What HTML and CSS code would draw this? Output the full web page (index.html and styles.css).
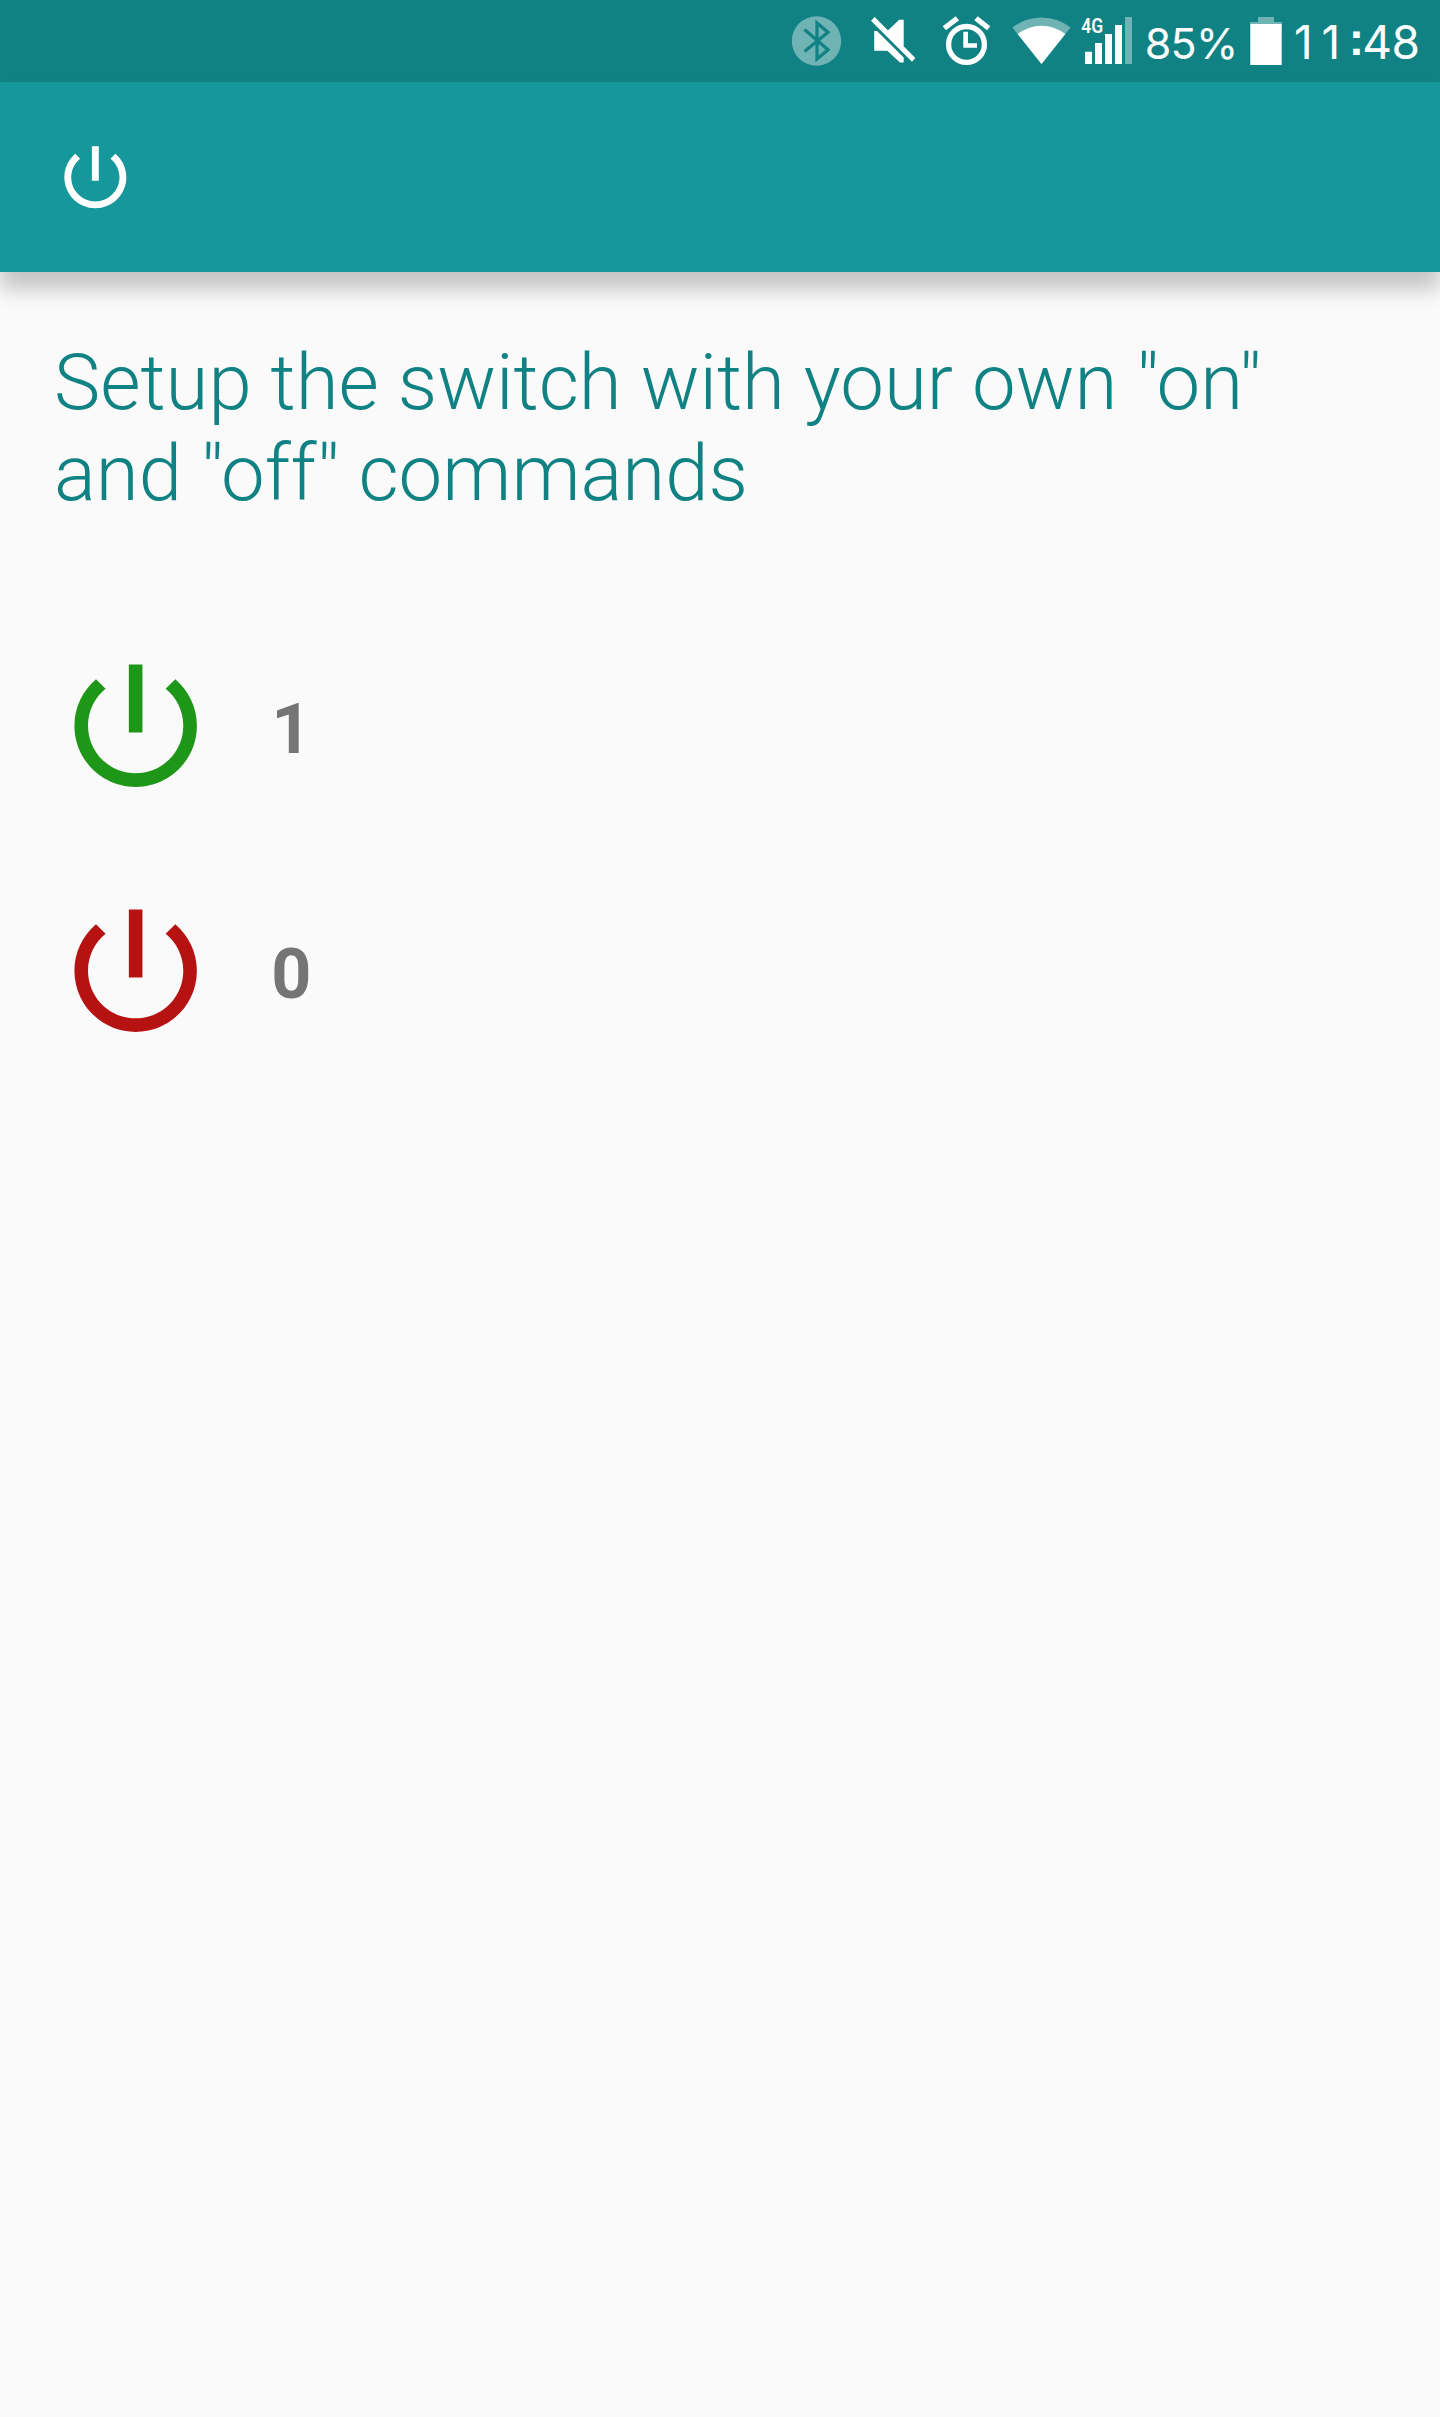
FILE: index.html
```html
<!DOCTYPE html>
<html lang="en">
<head>
<meta charset="utf-8">
<title>Switch</title>
<link rel="stylesheet" href="styles.css">
</head>
<body>
<svg class="sprite" aria-hidden="true">
  <symbol id="power" viewBox="0 0 24 24"><path d="M13 3h-2v10h2V3zm4.83 2.17l-1.42 1.42C17.99 7.86 19 9.81 19 12c0 3.87-3.13 7-7 7s-7-3.13-7-7c0-2.19 1.01-4.14 2.58-5.42L6.17 5.17C4.23 6.82 3 9.26 3 12c0 4.97 4.03 9 9 9s9-4.03 9-9c0-2.74-1.23-5.18-3.17-6.83z"/></symbol>
</svg>
<div class="status">
  <svg class="bluetooth" viewBox="790 0 60 82"><circle class="dim" cx="816.5" cy="41" r="24.7"/><path class="rune" d="M804.5 29.5 828 49.7 817 59V23L828 32.3 804.5 51.5"/></svg>
  <svg class="mute" viewBox="850 0 80 82"><path d="M887.3 31 899.3 19.7H903.7V48zM874.2 31H877L903.7 57.5V62.5H900L887.3 50.7H874.2zM871 20.7 874.7 17 915.3 58 912 61.7z"/></svg>
  <svg class="alarm" viewBox="930 0 70 82"><circle class="ring" cx="966.5" cy="44.4" r="17.9"/><path d="M963.3 31.7H968V43.3H977V47.7H963.3zM942.7 26.3 955.7 16.3 959 20.3 946 30.3zM977.7 16.3 990.3 26.3 987 30.3 974.3 20.3z"/></svg>
  <svg class="wifi" viewBox="1000 0 80 82"><path class="dim" d="M1041.5 64 1012.5 27.5A46.8 46.8 0 0 1 1070.5 27.5z"/><path d="M1041.5 64 1017.7 34A38.8 38.8 0 0 1 1065.3 34z"/></svg>
  <svg class="signal" viewBox="1080 0 60 82"><text x="1081.3" y="33" textLength="22" lengthAdjust="spacingAndGlyphs">4G</text><path d="M1085 51.7h7V64h-7zM1095 43h7v21h-7zM1105 34h7v30h-7zM1115 25h7v39h-7z"/><path class="dim" d="M1125 17h7v47h-7z"/></svg>
  <span class="percent">85%</span>
  <svg class="battery" viewBox="1240 0 50 82"><path class="dim" d="M1258 17h16v5h8v3h-32v-3h8z"/><path d="M1250.3 24h31.4v41h-31.4z"/></svg>
  <span class="clock"><span class="hour">11</span><span class="colon">:</span>48</span>
</div>
<header class="toolbar"><svg class="logo"><use href="#power"/></svg></header>
<main class="content">
  <h1 class="title">Setup the switch with your own "on"<br>and "off" commands</h1>
  <div class="row"><svg class="power on"><use href="#power"/></svg><span class="command">1</span></div>
  <div class="row"><svg class="power off"><use href="#power"/></svg><span class="command">0</span></div>
</main>
</body>
</html>
```
FILE: styles.css
```css
* { box-sizing: border-box; }
body { margin: 0; min-height: 2417px; background: #fafafa; font-family: Roboto, sans-serif; }
svg { display: block; flex: none; }
.sprite { position: absolute; width: 0; height: 0; }
.status { display: flex; height: 82px; padding-left: 790px; background: #118283; color: #fff; fill: #fff; overflow: hidden; }
.status svg { height: 82px; }
.dim { fill: #6fb3b4; }
.rune { fill: none; stroke: #118283; stroke-width: 3.3; }
.ring { fill: none; stroke: #fff; stroke-width: 5.3; }
.bluetooth { width: 60px; }
.mute { width: 80px; }
.alarm { width: 70px; }
.wifi { width: 80px; }
.signal { width: 60px; font: 600 20px Roboto, sans-serif; }
.percent { width: 100px; padding-left: 4.8px; font: 400 43px/86px Inter, sans-serif; letter-spacing: -0.8px; white-space: nowrap; }
.battery { width: 50px; }
.clock { padding-left: 4px; font: 400 46px/84px Inter, sans-serif; letter-spacing: -0.7px; white-space: nowrap; }
.hour { letter-spacing: 8.7px; }
.colon { font: 700 46px/0 "Liberation Sans", sans-serif; letter-spacing: -1.8px; vertical-align: 4px; }
.toolbar { height: 190px; padding: 53.5px 0 0 53.5px; background: #16979c; box-shadow: 0 17px 20px rgba(0, 0, 0, 0.22); }
.logo { width: 82.7px; height: 82.7px; fill: #fff; }
.content { padding: 65px 54px 0; }
.title { margin: 0 0 124.6px; color: #118283; font-weight: 300; font-size: 77.95px; line-height: 91px; white-space: nowrap; }
.row { display: flex; align-items: center; height: 163.3px; margin-bottom: 81.7px; gap: 54px; }
.power { width: 163.3px; height: 163.3px; }
.on { fill: #1e9618; }
.off { fill: #b71212; }
.command { color: #757575; font-weight: 700; font-size: 70px; line-height: 82px; padding-top: 7px; }
```
